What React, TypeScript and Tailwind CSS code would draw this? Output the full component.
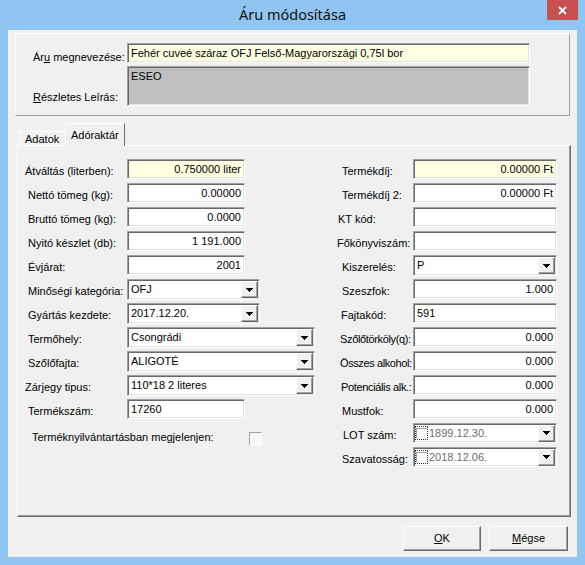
// Windows dialog "Áru módosítása" – Adóraktár tab of the product editor.
import type { ReactNode } from "react";

const sunken =
  "border border-t-[#a0a0a0] border-l-[#a0a0a0] border-r-white border-b-white shadow-[inset_1px_1px_0_#696969,inset_-1px_-1px_0_#e3e3e3]";
const raised =
  "border border-t-white border-l-white border-r-[#696969] border-b-[#696969] shadow-[inset_-1px_-1px_0_#a0a0a0]";

function Arrow() {
  return (
    <svg width="7" height="4" viewBox="0 0 7 4" shapeRendering="crispEdges">
      <rect x="0" y="0" width="7" height="1" fill="#000" />
      <rect x="1" y="1" width="5" height="1" fill="#000" />
      <rect x="2" y="2" width="3" height="1" fill="#000" />
      <rect x="3" y="3" width="1" height="1" fill="#000" />
    </svg>
  );
}

function DropBtn() {
  return (
    <span className={`${raised} w-[17px] h-[17px] bg-[#f0f0f0] flex items-center justify-center shrink-0`}>
      <Arrow />
    </span>
  );
}

function Edit({ w, value = "", right, yellow }: { w: string; value?: string; right?: boolean; yellow?: boolean }) {
  return (
    <div
      className={`${sunken} ${w} h-[20px] flex items-center px-[3px] leading-[13px] ${right ? "justify-end" : ""} ${
        yellow ? "bg-[#ffffe1]" : "bg-white"
      }`}
    >
      {value}
    </div>
  );
}

function Combo({ w, value }: { w: string; value: string }) {
  return (
    <div className={`${sunken} ${w} h-[21px] bg-white flex items-center pl-[3px] pr-[1px] leading-[13px]`}>
      <span className="flex-1 whitespace-nowrap overflow-hidden">{value}</span>
      <DropBtn />
    </div>
  );
}

function DateCombo({ value }: { value: string }) {
  return (
    <div className={`${sunken} w-[144px] h-[20px] bg-white flex items-center pl-[1px] pr-[1px] leading-[13px]`}>
      <span className="w-[13px] h-[14px] border border-dotted border-[#333] flex items-center justify-center shrink-0">
        <span className="w-[11px] h-[11px] border border-t-[#a0a0a0] border-l-[#a0a0a0] border-r-white border-b-white bg-white" />
      </span>
      <span className="flex-1 pl-[1px] text-[#6d6d6d]">{value}</span>
      <DropBtn />
    </div>
  );
}

function Row({ label, ml, lw, children }: { label: string; ml: string; lw: string; children: ReactNode }) {
  return (
    <div className="h-[24px] flex items-start">
      <div className={`${lw} shrink-0 whitespace-nowrap pt-[6px] leading-[13px]`}>
        <span className={ml}>{label}</span>
      </div>
      {children}
    </div>
  );
}

const LW = "w-[102px]";
const RW = "w-[76px]";

export default function App() {
  return (
    <div className="w-[585px] h-[565px] bg-[#90c5f1] flex flex-col font-['Liberation_Sans',Arial,sans-serif] text-[11px] text-black">
      {/* title bar */}
      <div className="h-[30px] grid grid-cols-[1fr_auto_1fr]">
        <div />
        <div className="pt-[4px] text-[14.5px] leading-[20px] text-[#111] font-['Noto_Sans',sans-serif]">Áru módosítása</div>
        <div className="flex justify-end pr-[7px]">
          <div className="w-[31px] h-[20px] bg-[#c75050] flex items-center justify-center">
            <svg width="9" height="9" viewBox="0 0 9 9">
              <path d="M1 1L8 8M8 1L1 8" stroke="#fff" strokeWidth="1.8" />
            </svg>
          </div>
        </div>
      </div>

      {/* client area */}
      <div className="ml-[8px] w-[569px] h-[527px] bg-[#f0f0f0] flex flex-col">
        {/* header panel */}
        <div className="ml-[7px] mt-[3px] w-[555px] h-[83px] border border-t-white border-l-white border-r-[#a0a0a0] border-b-[#a0a0a0] pl-[17px] pt-[9px]">
          <div className="flex h-[23px] items-start">
            <div className="w-[94px] pt-[8px] leading-[13px]">
              Ár<span className="underline">u</span> megnevezése:
            </div>
            <div className={`${sunken} w-[403px] h-[20px] bg-[#ffffe1] flex items-center px-[3px] leading-[13px]`}>
              Fehér cuveé száraz OFJ Felső-Magyarországi 0,75l bor
            </div>
          </div>
          <div className="flex h-[40px] items-start">
            <div className="w-[94px] pt-[25px] leading-[13px]">
              <span className="underline">R</span>észletes Leírás:
            </div>
            <div className={`${sunken} w-[403px] h-[40px] bg-[#c0c0c0] px-[3px] pt-[3px] leading-[13px]`}>ESEO</div>
          </div>
        </div>

        {/* tabs */}
        <div className="ml-[9px] mt-[7px] h-[23px] flex items-end relative z-10">
          <div className="ml-[2px] w-[47px] h-[15px] border-t border-l border-t-white border-l-white pl-[5px] leading-[13px] pt-[1px]">
            Adatok
          </div>
          <div className="-ml-[1px] w-[60px] h-[23px] bg-[#f0f0f0] border-t border-l border-r border-t-white border-l-white border-r-[#696969] pl-[5px] pt-[5px] leading-[13px]">
            Adóraktár
          </div>
        </div>

        {/* tab page */}
        <div className="ml-[9px] -mt-[1px] w-[554px] h-[372px] border border-t-white border-l-white border-r-[#696969] border-b-[#696969] shadow-[inset_-1px_-1px_0_#a0a0a0] pl-[7px] pt-[13px] flex">
          <div className="w-[312px] flex flex-col">
            <Row label="Átváltás (literben):" ml="" lw={LW}>
              <Edit w="w-[118px]" value="0.750000 liter" right yellow />
            </Row>
            <Row label="Nettó tömeg (kg):" ml="ml-[3px]" lw={LW}>
              <Edit w="w-[118px]" value="0.00000" right />
            </Row>
            <Row label="Bruttó tömeg (kg):" ml="ml-[3px]" lw={LW}>
              <Edit w="w-[118px]" value="0.0000" right />
            </Row>
            <Row label="Nyitó készlet (db):" ml="ml-[3px]" lw={LW}>
              <Edit w="w-[118px]" value="1 191.000" right />
            </Row>
            <Row label="Évjárat:" ml="ml-[3px]" lw={LW}>
              <Edit w="w-[118px]" value="2001" right />
            </Row>
            <Row label="Minőségi kategória:" ml="ml-[3px]" lw={LW}>
              <Combo w="w-[133px]" value="OFJ" />
            </Row>
            <Row label="Gyártás kezdete:" ml="ml-[3px]" lw={LW}>
              <Combo w="w-[133px]" value="2017.12.20." />
            </Row>
            <Row label="Termőhely:" ml="ml-[3px]" lw={LW}>
              <Combo w="w-[188px]" value="Csongrádi" />
            </Row>
            <Row label="Szőlőfajta:" ml="ml-[3px]" lw={LW}>
              <Combo w="w-[188px]" value="ALIGOTÉ" />
            </Row>
            <Row label="Zárjegy tipus:" ml="" lw={LW}>
              <Combo w="w-[188px]" value="110*18 2 literes" />
            </Row>
            <Row label="Termékszám:" ml="ml-[3px]" lw={LW}>
              <Edit w="w-[118px]" value="17260" />
            </Row>
            <div className="h-[24px] flex items-start">
              <div className="w-[224px] pl-[7px] pt-[8px] leading-[13px] whitespace-nowrap">Terméknyilvántartásban megjelenjen:</div>
              <span className="mt-[9px] w-[13px] h-[13px] border border-t-[#a0a0a0] border-l-[#a0a0a0] border-r-white border-b-white bg-[#f7f7f7]" />
            </div>
          </div>

          <div className="flex flex-col">
            <Row label="Termékdíj:" ml="ml-[5px]" lw={RW}>
              <Edit w="w-[144px]" value="0.00000 Ft" right yellow />
            </Row>
            <Row label="Termékdíj 2:" ml="ml-[5px]" lw={RW}>
              <Edit w="w-[144px]" value="0.00000 Ft" right />
            </Row>
            <Row label="KT kód:" ml="ml-[1px]" lw={RW}>
              <Edit w="w-[144px]" />
            </Row>
            <Row label="Főkönyviszám:" ml="" lw={RW}>
              <Edit w="w-[144px]" />
            </Row>
            <Row label="Kiszerelés:" ml="ml-[5px]" lw={RW}>
              <Combo w="w-[144px]" value="P" />
            </Row>
            <Row label="Szeszfok:" ml="ml-[5px]" lw={RW}>
              <Edit w="w-[144px]" value="1.000" right />
            </Row>
            <Row label="Fajtakód:" ml="ml-[4px]" lw={RW}>
              <Edit w="w-[144px]" value="591" />
            </Row>
            <Row label="Szőlőtörköly(q):" ml="ml-[3px] tracking-[-0.35px]" lw={RW}>
              <Edit w="w-[144px]" value="0.000" right />
            </Row>
            <Row label="Összes alkohol:" ml="ml-[3px] tracking-[-0.4px]" lw={RW}>
              <Edit w="w-[144px]" value="0.000" right />
            </Row>
            <Row label="Potenciális alk.:" ml="ml-[4px] tracking-[-0.35px]" lw={RW}>
              <Edit w="w-[144px]" value="0.000" right />
            </Row>
            <Row label="Mustfok:" ml="ml-[5px]" lw={RW}>
              <Edit w="w-[144px]" value="0.000" right />
            </Row>
            <Row label="LOT szám:" ml="ml-[6px]" lw={RW}>
              <DateCombo value="1899.12.30." />
            </Row>
            <Row label="Szavatosság:" ml="ml-[5px]" lw={RW}>
              <DateCombo value="2018.12.06." />
            </Row>
          </div>
        </div>

        {/* buttons */}
        <div className="mt-[9px] mr-[9px] flex justify-end gap-[8px]">
          <button className={`${raised} w-[78px] h-[25px] bg-[#f0f0f0] leading-[13px]`}>
            <span className="underline">O</span>K
          </button>
          <button className={`${raised} w-[79px] h-[25px] bg-[#f0f0f0] leading-[13px]`}>
            <span className="underline">M</span>égse
          </button>
        </div>
      </div>
    </div>
  );
}
